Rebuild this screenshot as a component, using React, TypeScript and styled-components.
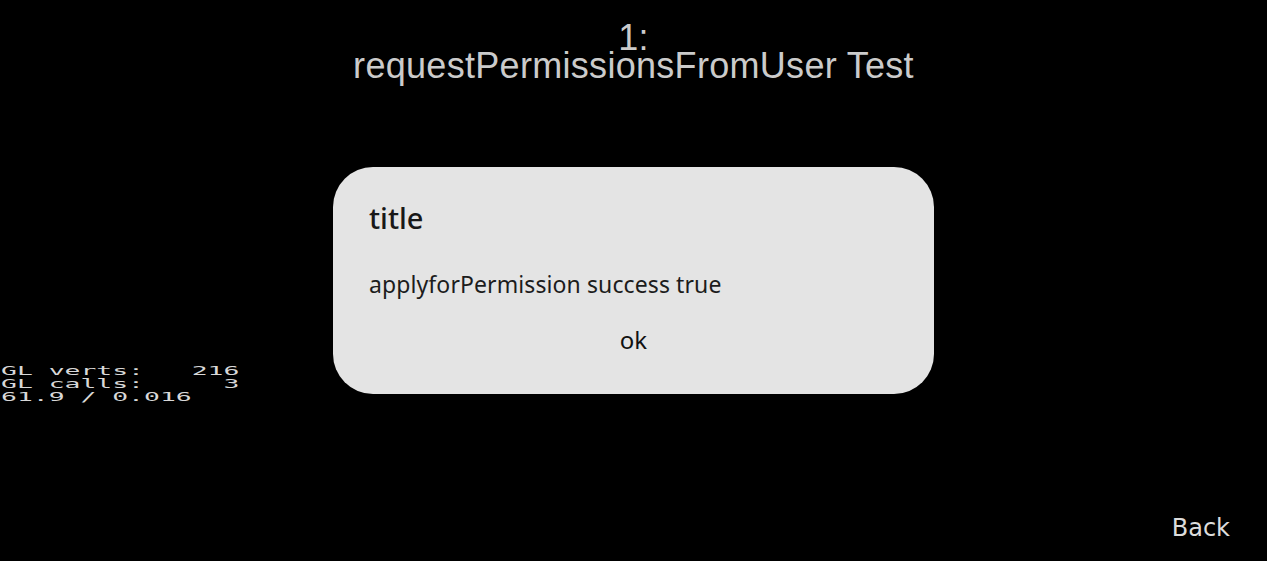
import styled, { createGlobalStyle } from "styled-components";

const GlobalStyle = createGlobalStyle`
  html, body {
    margin: 0;
    padding: 0;
    background: #000;
  }
  #root {
    width: 1267px;
    height: 561px;
  }
`;

function App() {
  return (
    <>
      <GlobalStyle />
      <Screen>
        <Header>
          <HeaderLine>1:</HeaderLine>
          <HeaderLine>requestPermissionsFromUser Test</HeaderLine>
        </Header>
        <Stats>
          <StatLine>GL verts:   216</StatLine>
          <StatLine>GL calls:     3</StatLine>
          <StatLine>61.9 / 0.016</StatLine>
        </Stats>
        <Footer>
          <BackButton>Back</BackButton>
        </Footer>
        <Overlay>
          <Dialog>
            <DialogTitle>title</DialogTitle>
            <DialogMessage>applyforPermission success true</DialogMessage>
            <DialogButton>ok</DialogButton>
          </Dialog>
        </Overlay>
      </Screen>
    </>
  );
}

export default App;

const Screen = styled.div`
  position: relative;
  width: 1267px;
  height: 561px;
  background: #000;
  display: flex;
  flex-direction: column;
  overflow: hidden;
`;

const Header = styled.div`
  display: flex;
  flex-direction: column;
  align-items: center;
  padding-top: 24px;
`;

const HeaderLine = styled.div`
  font-family: "Liberation Sans", Arial, sans-serif;
  font-size: 36px;
  line-height: 28px;
  color: #cbcbcb;
  letter-spacing: 0.3px;
`;

const Stats = styled.div`
  position: absolute;
  left: 1px;
  top: 364px;
  display: flex;
  flex-direction: column;
  transform: scaleX(2.03);
  transform-origin: left top;
`;

const StatLine = styled.pre`
  margin: 0;
  font-family: "DejaVu Sans Mono", monospace;
  font-size: 13px;
  line-height: 13px;
  color: #d8d8d8;
`;

const Footer = styled.div`
  margin-top: auto;
  display: flex;
  justify-content: flex-end;
  padding: 0 37px 18px 0;
`;

const BackButton = styled.div`
  font-family: "DejaVu Sans", sans-serif;
  font-size: 24px;
  line-height: 30px;
  color: #dcdcdc;
`;

const Overlay = styled.div`
  position: absolute;
  left: 333px;
  top: 167px;
`;

const Dialog = styled.div`
  width: 601px;
  height: 227px;
  box-sizing: border-box;
  background: #e4e4e4;
  border-radius: 40px;
  padding: 32px 36px 0 36px;
  display: flex;
  flex-direction: column;
`;

const DialogTitle = styled.div`
  font-family: "Noto Sans", sans-serif;
  font-size: 29px;
  font-weight: 500;
  line-height: 38px;
  color: #181818;
`;

const DialogMessage = styled.div`
  margin-top: 32px;
  font-family: "Noto Sans", sans-serif;
  font-size: 23px;
  line-height: 30px;
  color: #1c1c1c;
  letter-spacing: 0.1px;
`;

const DialogButton = styled.div`
  margin-top: 26px;
  align-self: center;
  font-family: "Noto Sans", sans-serif;
  font-size: 24px;
  line-height: 30px;
  color: #111;
`;
